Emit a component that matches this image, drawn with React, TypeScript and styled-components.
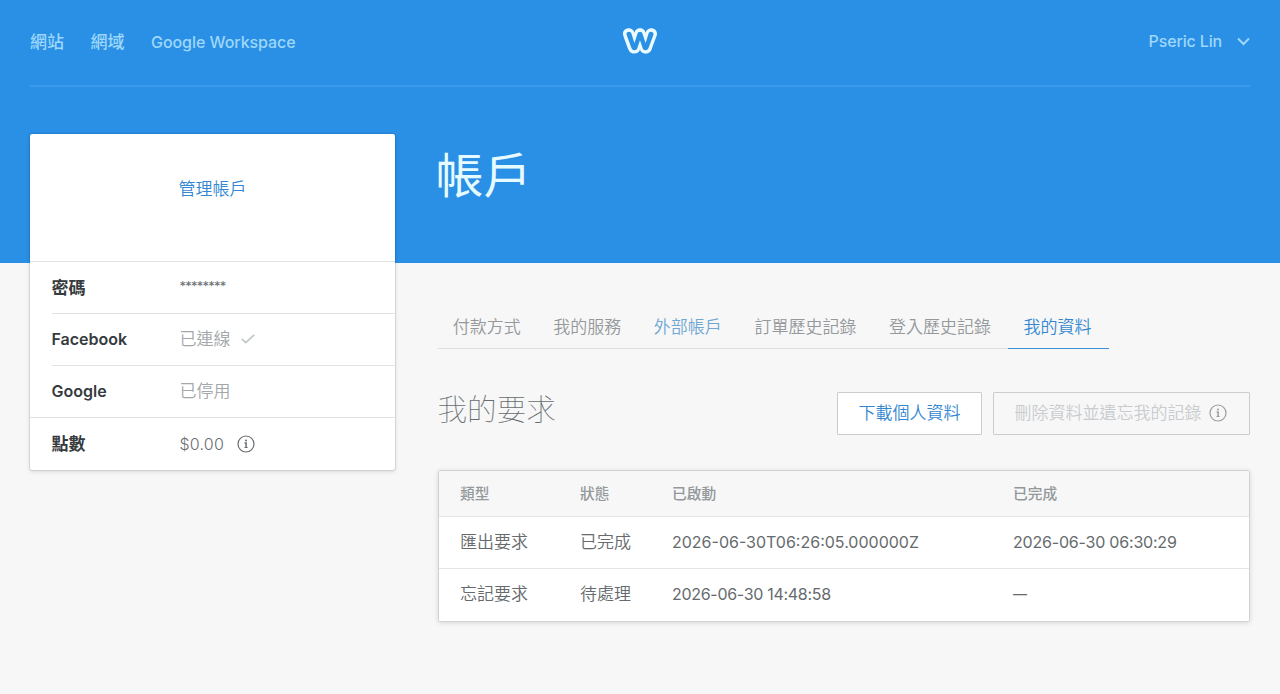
import React from "react";
import styled, { createGlobalStyle } from "styled-components";
import { FaWeebly } from "react-icons/fa";

const GlobalStyle = createGlobalStyle`
  *, *::before, *::after { box-sizing: border-box; }
  body {
    margin: 0;
    background: #f7f7f7;
    color: #666c70;
    font-family: Inter, "Noto Sans CJK TC", sans-serif;
    font-size: 17px;
    font-weight: 350;
    line-height: 24px;
  }
  button { font: inherit; cursor: pointer; }
  a { color: inherit; text-decoration: none; }
`;

const Page = styled.div`
  min-height: 694px;
  background: linear-gradient(#2990e6 263px, #f7f7f7 263px);
  padding: 0 30px;
`;

const TopBar = styled.header`
  display: grid;
  grid-template-columns: 1fr auto 1fr;
  align-items: center;
  height: 87px;
  padding-bottom: 4px;
  border-bottom: 2px solid #3c9aed;
  color: #9ed7fa;
  font-weight: 500;
`;

const Nav = styled.nav`
  display: flex;
  gap: 26.5px;
  padding-top: 2px;
`;

const Latin = styled.span<{ $size?: number; $spacing?: number }>`
  font-size: ${(p) => p.$size ?? 16}px;
  letter-spacing: ${(p) => p.$spacing ?? 0}px;
  white-space: nowrap;
`;

const Logo = styled(FaWeebly)`
  display: block;
  width: 34px;
  height: 34px;
  color: #e9fbff;
`;

const UserMenu = styled.a`
  display: flex;
  justify-content: flex-end;
  align-items: center;
  gap: 15px;
  padding-top: 1px;
`;

const Body = styled.div`
  display: grid;
  grid-template-columns: 365px 812.5px;
  justify-content: space-between;
  align-items: start;
`;

const Card = styled.aside`
  margin-top: 47px;
  height: 336px;
  background: #fff;
  border-radius: 2px;
  box-shadow: 0 0 1px 1px rgba(0, 0, 0, 0.1), 0 2px 5px rgba(0, 0, 0, 0.1);
`;

const CardTop = styled.div`
  display: flex;
  justify-content: center;
  height: 127px;
  padding-top: 42.5px;
  color: #3488d2;
`;

const CardRow = styled.div<{ $full?: boolean }>`
  display: grid;
  grid-template-columns: 128px 1fr;
  align-items: center;
  height: 52.1px;
  margin-left: ${(p) => (p.$full ? 0 : 21.5)}px;
  padding-left: ${(p) => (p.$full ? 21.5 : 0)}px;
  padding-bottom: ${(p) => (p.$full ? 0 : 1)}px;
  border-top: 1px solid #e2e3e4;
`;

const Label = styled.span`
  color: #363b3e;
  font-weight: 600;
`;

const Value = styled.span<{ $muted?: boolean }>`
  display: flex;
  align-items: center;
  color: ${(p) => (p.$muted ? "#a3a7aa" : "#686d70")};
`;

const Password = styled(Value)`
  padding-bottom: 3px;
  font-size: 13px;
  font-weight: 400;
  letter-spacing: -0.75px;
`;

const CheckMark = styled.svg`
  margin-left: 10px;
`;

const CircledInfo = styled.svg<{ $gap: number }>`
  flex: none;
  margin-left: ${(p) => p.$gap}px;
`;

const Title = styled.h1`
  margin: 48px 0 0 -2px;
  height: 80px;
  color: #e6fbff;
  font-size: 48px;
  font-weight: 400;
  line-height: 82px;
`;

const Tabs = styled.nav`
  display: flex;
  height: 45px;
  margin-top: 89px;
`;

const Tab = styled.a<{ $state?: "active" | "hover" }>`
  padding: 11px 17.4px 0 15.2px;
  border-bottom: 1px solid ${(p) => (p.$state === "active" ? "#3b8fd6" : "#dcdfe0")};
  color: ${(p) => (p.$state === "active" ? "#3488d2" : p.$state === "hover" ? "#70a8d4" : "#95999c")};
  white-space: nowrap;
`;

const SectionHead = styled.div`
  display: flex;
  gap: 11px;
  margin-top: 43px;
  height: 43px;
`;

const SectionTitle = styled.h2`
  flex: 1;
  margin: 0;
  font-size: 29.6px;
  font-weight: 100;
  line-height: 34px;
`;

const Button = styled.button<{ $ghost?: boolean }>`
  display: flex;
  align-items: center;
  justify-content: center;
  width: ${(p) => (p.$ghost ? 257 : 145)}px;
  height: 43px;
  padding: 0 ${(p) => (p.$ghost ? 2 : 0)}px 1px 0;
  border: 1px solid #c9cdd0;
  border-radius: 1px;
  background: ${(p) => (p.$ghost ? "transparent" : "#fff")};
  color: ${(p) => (p.$ghost ? "#c9cccf" : "#3488d2")};
`;

const Table = styled.div`
  margin-top: 35px;
  height: 152px;
  background: #fff;
  border: 1px solid #d0d2d3;
  border-radius: 2px;
  box-shadow: 0 1px 5px rgba(0, 0, 0, 0.13);
`;

const TableRow = styled.div<{ $head?: boolean }>`
  display: grid;
  grid-template-columns: 120px 92px 341px 1fr;
  align-items: center;
  height: ${(p) => (p.$head ? 45 : 52.3)}px;
  padding-left: 21.5px;
  padding-bottom: ${(p) => (p.$head ? 0 : 1)}px;
  background: ${(p) => (p.$head ? "#f7f7f7" : "#fff")};
  color: ${(p) => (p.$head ? "#93989b" : "#666a6d")};
  font-size: ${(p) => (p.$head ? 14.7 : 17)}px;
  font-weight: ${(p) => (p.$head ? 500 : 350)};
  & + & { border-top: 1px solid #e3e4e5; }
  ${Latin} { font-weight: 400; }
`;

const InfoIcon = ({ gap, color }: { gap: number; color: string }) => (
  <CircledInfo $gap={gap} width="18" height="18" viewBox="0 0 18 18" fill="none" stroke={color}>
    <circle cx="9" cy="9" r="8" strokeWidth="1.2" />
    <circle cx="9" cy="5.6" r="1" fill={color} stroke="none" />
    <path d="M7.6 8H9.1V12.6" strokeWidth="1.5" />
    <path d="M7.5 12.5H10.6" strokeWidth="1" />
  </CircledInfo>
);

const tabs: { name: string; state?: "active" | "hover" }[] = [
  { name: "付款方式" },
  { name: "我的服務" },
  { name: "外部帳戶", state: "hover" },
  { name: "訂單歷史記錄" },
  { name: "登入歷史記錄" },
  { name: "我的資料", state: "active" },
];

const requests = [
  { type: "匯出要求", status: "已完成", started: "2026-06-30T06:26:05.000000Z", finished: "2026-06-30 06:30:29" },
  { type: "忘記要求", status: "待處理", started: "2026-06-30 14:48:58", finished: "—" },
];

export default function App() {
  return (
    <>
      <GlobalStyle />
      <Page>
        <TopBar>
          <Nav>
            <a href="#sites">網站</a>
            <a href="#domains">網域</a>
            <a href="#workspace"><Latin $spacing={-0.06}>Google Workspace</Latin></a>
          </Nav>
          <Logo />
          <UserMenu href="#user">
            <Latin $spacing={-0.15}>Pseric Lin</Latin>
            <svg width="13" height="9" viewBox="0 0 13 9" fill="none" stroke="currentColor" strokeWidth="2">
              <path d="M1 1.5L6.5 7L12 1.5" />
            </svg>
          </UserMenu>
        </TopBar>
        <Body>
          <Card>
            <CardTop><a href="#manage">管理帳戶</a></CardTop>
            <CardRow $full>
              <Label>密碼</Label>
              <Password>********</Password>
            </CardRow>
            <CardRow>
              <Label><Latin>Facebook</Latin></Label>
              <Value $muted>
                已連線
                <CheckMark width="14" height="10" viewBox="0 0 14 10" fill="none" stroke="#c3c7c8" strokeWidth="1.8">
                  <path d="M0.8 4.8L4.8 8.6L13.2 0.9" />
                </CheckMark>
              </Value>
            </CardRow>
            <CardRow>
              <Label><Latin>Google</Latin></Label>
              <Value $muted>已停用</Value>
            </CardRow>
            <CardRow $full>
              <Label>點數</Label>
              <Value><Latin $spacing={0.2}>$0.00</Latin><InfoIcon gap={13} color="#686d70" /></Value>
            </CardRow>
          </Card>
          <main>
            <Title>帳戶</Title>
            <Tabs>
              {tabs.map((tab) => (
                <Tab key={tab.name} href="#tab" $state={tab.state}>{tab.name}</Tab>
              ))}
            </Tabs>
            <SectionHead>
              <SectionTitle>我的要求</SectionTitle>
              <Button>下載個人資料</Button>
              <Button $ghost>刪除資料並遺忘我的記錄<InfoIcon gap={7} color="#999da0" /></Button>
            </SectionHead>
            <Table>
              <TableRow $head>
                <span>類型</span><span>狀態</span><span>已啟動</span><span>已完成</span>
              </TableRow>
              {requests.map((r) => (
                <TableRow key={r.type}>
                  <span>{r.type}</span>
                  <span>{r.status}</span>
                  <Latin $spacing={r.started.includes("T") ? 0 : -0.3}>{r.started}</Latin>
                  <Latin $size={r.finished === "—" ? 14 : 16} $spacing={-0.2}>{r.finished}</Latin>
                </TableRow>
              ))}
            </Table>
          </main>
        </Body>
      </Page>
    </>
  );
}
